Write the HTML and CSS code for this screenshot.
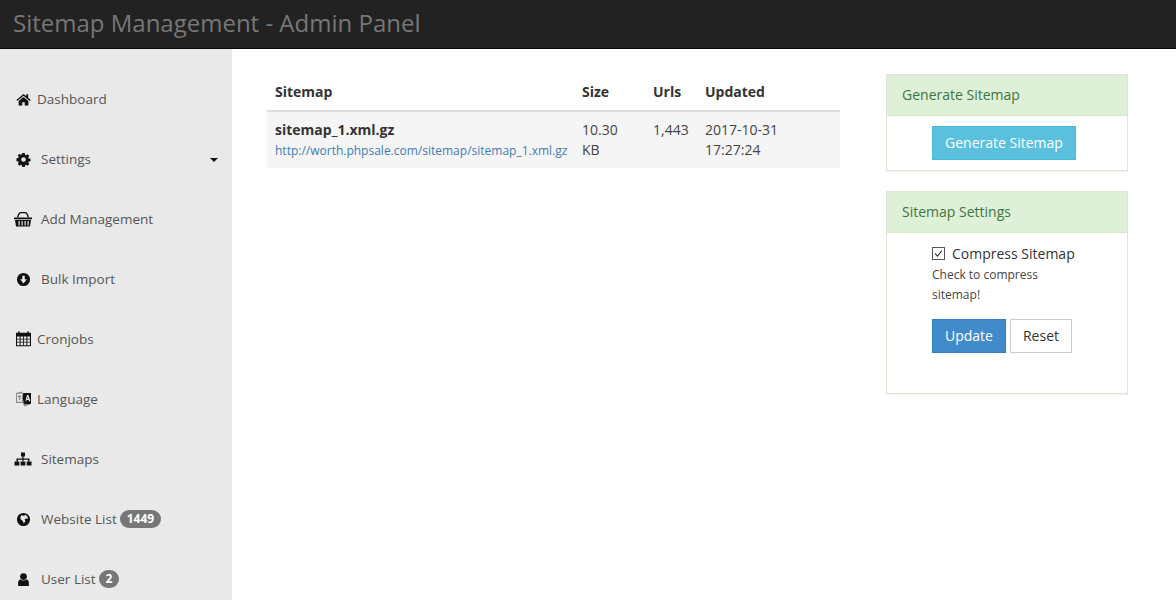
FILE: index.html
```html
<!DOCTYPE html>
<html lang="en">
<head>
    <meta charset="UTF-8">
    <title>Sitemap Management - Admin Panel</title>
    <link rel="stylesheet" href="styles.css">
</head>
<body>
<div class="topbar">Sitemap Management - Admin Panel</div>
<div class="wrap">
    <ul class="sidebar">
        <li><a href="#" class="tight">
            <svg class="icon" viewBox="0 0 16 16"><path d="M8 2 .4 8.4l.9 1.100L8 4l6.700 5.500.9-1.100L13 6.200V2.500h-2v2z"/><path d="M8 5.200 2.800 9.500v5h3.900V11h2.600v3.500h3.900v-5z"/></svg>
            Dashboard</a></li>
        <li><a href="#">
            <svg class="icon" viewBox="0 0 16 16"><path fill-rule="evenodd" d="M6.700 1h2.600l.4 2 1 .4 1.700-1.100 1.800 1.800-1.100 1.700.4 1 2 .4v2.600l-2 .4-.4 1 1.100 1.700-1.800 1.800-1.700-1.100-1 .4-.4 2H6.700l-.4-2-1-.4-1.700 1.100-1.800-1.800 1.100-1.700-.4-1-2-.4V6.700l2-.4.4-1-1.100-1.700 1.800-1.800 1.700 1.100 1-.4zM8 5.500a2.500 2.500 0 1 0 0 5 2.500 2.500 0 0 0 0-5z"/></svg>
            Settings<span class="caret"></span></a></li>
        <li><a href="#">
            <svg class="icon wide" viewBox="0 0 18 16"><path d="M0 6.500h18v1.800H0z"/><path fill-rule="evenodd" d="M1 9h16l-1 6.500H2zM4.500 10v4.500h1.200V10zm3 0v4.500h1.200V10zm3 0v4.500h1.200V10zm3 0v4.500h1.200V10z"/><path d="M3 6.500C3.500 3 5 1 7 1h4c2 0 3.500 2 4 5.500h-1.400C13.200 3.800 12 2.300 10.800 2.300H7.200C6 2.300 4.800 3.800 4.400 6.500z"/></svg>
            Add Management</a></li>
        <li><a href="#">
            <svg class="icon" viewBox="0 0 16 16"><path fill-rule="evenodd" d="M8 1a7 7 0 1 0 0 14A7 7 0 0 0 8 1zM6.700 4h2.600v3.600h2.300L8 12.200 4.400 7.600h2.300z"/></svg>
            Bulk Import</a></li>
        <li><a href="#" class="tight">
            <svg class="icon tall" viewBox="1 1.500 14 14.500"><path fill-rule="evenodd" d="M1 3h2V1.800h1.500V3h7V1.800H13V3h2v12.500H1zM2 6.500v2h2.400v-2zm3.300 0v2h2.300v-2zm3.100 0v2h2.300v-2zm3.200 0v2H14v-2zM2 9.300v2h2.400v-2zm3.300 0v2h2.300v-2zm3.100 0v2h2.300v-2zm3.200 0v2H14v-2zM2 12.100v2.400h2.400v-2.400zm3.300 0v2.400h2.300v-2.400zm3.100 0v2.400h2.300v-2.400zm3.200 0v2.400H14v-2.400z"/></svg>
            Cronjobs</a></li>
        <li><a href="#" class="tight">
            <svg class="icon tall" viewBox="1 1 14.500 14.500"><path fill="#8a8a8a" fill-rule="evenodd" d="M1 2.500 7 1l1 3.500 6.500 9L9 15.500 7.500 12H1zm1 1V11h5V3z"/><path fill-rule="evenodd" d="M8 2.500h7.500V13H9L7.500 8zm3.700 2-1.900 6h1.300l.4-1.300h1.700l.4 1.300h1.300L13 4.500zm.6 1.600.5 2h-1z"/><path fill="#555" d="M3 5h3v1h-.7L5 9H3.600l1-.8L3.300 7l.7-.3.8.6.2-1.300H3z"/></svg>
            Language</a></li>
        <li><a href="#">
            <svg class="icon wide" viewBox="0 0 18 16"><path d="M7 1.500h4v4H9.600v2h5.900v3H14V8.800H9.600v1.700H8.400V8.800H4v1.700H2.500v-3h5.900v-2H7z"/><path d="M.5 10.500h4.800v4H.5zM6.600 10.500h4.800v4H6.600zM12.700 10.500h4.800v4h-4.800z"/></svg>
            Sitemaps</a></li>
        <li><a href="#">
            <svg class="icon" viewBox="0 0 16 16"><path fill-rule="evenodd" d="M8 1a7 7 0 1 0 0 14A7 7 0 0 0 8 1zM5.500 3.500l3 .5 1.500-1 2 1.500.8 3-1.800-.5-1.800.8.800 2-1.800 2.400-.9-2.700-1.800-1.200-1-1.800z"/></svg>
            Website List<span class="badge">1449</span></a></li>
        <li><a href="#">
            <svg class="icon" viewBox="0 0 16 16"><circle cx="8" cy="4.800" r="3.600"/><path d="M2.300 15v-3.500Q2.300 8.200 5 8q3 2 6 0 2.700.2 2.700 3.500V15z"/></svg>
            User List<span class="badge">2</span></a></li>
    </ul>

    <div class="main">
        <table class="sitemaps">
            <thead>
            <tr>
                <th class="col-name">Sitemap</th>
                <th class="col-size">Size</th>
                <th class="col-urls">Urls</th>
                <th>Updated</th>
            </tr>
            </thead>
            <tbody>
            <tr>
                <td><b>sitemap_1.xml.gz</b><a href="#" class="file-url">http://worth.phpsale.com/sitemap/sitemap_1.xml.gz</a></td>
                <td>10.30 KB</td>
                <td>1,443</td>
                <td>2017-10-31 17:27:24</td>
            </tr>
            </tbody>
        </table>
    </div>

    <div class="side">
        <div class="panel">
            <div class="panel-heading">Generate Sitemap</div>
            <div class="panel-body">
                <a href="#" class="btn btn-info">Generate Sitemap</a>
            </div>
        </div>
        <div class="panel">
            <div class="panel-heading">Sitemap Settings</div>
            <div class="panel-body settings">
                <label class="check">
                    <span class="box"><svg viewBox="0 0 13 13"><path d="M2.500 6.500 5.300 9.500 10.500 3" fill="none" stroke="#333" stroke-width="1.300"/></svg></span>
                    Compress Sitemap
                </label>
                <p class="help">Check to compress sitemap!</p>
                <div class="actions">
                    <a href="#" class="btn btn-primary">Update</a>
                    <a href="#" class="btn btn-default">Reset</a>
                </div>
            </div>
        </div>
    </div>
</div>
</body>
</html>
```
FILE: styles.css
```css
*{
    margin:0;
    padding:0;
    box-sizing: border-box;
}
html, body{
    height:600px;
    overflow: hidden;
}
body{
    font-family: "Open Sans", "Liberation Sans", sans-serif;
    font-size:14px;
    color:#333;
    background:#fff;
}
a{
    text-decoration: none;
}

.topbar{
    height:49px;
    line-height:46px;
    padding-left:13px;
    font-size:24px;
    color:#777;
    background:#222;
    border-bottom:1px solid #080808;
}
.wrap{
    display: flex;
    height:551px;
}

.sidebar{
    width:232px;
    flex:none;
    padding-top:20px;
    background:#e9e9e9;
    list-style: none;
}
.sidebar li{
    height:60px;
}
.sidebar a{
    display: flex;
    align-items: center;
    height:60px;
    padding:0 14px 0 16px;
    font-size:13.5px;
    color:#555;
}
.icon{
    width:15px;
    height:15px;
    flex:none;
    margin-right:10px;
    fill:#111;
}
.icon.wide{
    width:18px;
    height:16px;
    margin-left:-2px;
    margin-right:9px;
}
.icon.tall{
    height:16px;
}
.tight .icon{
    margin-right:6px;
}
.caret{
    margin-left:auto;
    margin-top:2px;
    border-top:4px solid #111;
    border-left:4px solid transparent;
    border-right:4px solid transparent;
}
.badge{
    height:18px;
    min-width:10px;
    padding:0 7px;
    margin-left:3px;
    font-size:12px;
    font-weight:bold;
    line-height:18px;
    color:#fff;
    background:#777;
    border-radius:10px;
}

.main{
    width:608px;
    flex:none;
    padding:25px 0 0 35px;
}
.sitemaps{
    width:573px;
    table-layout: fixed;
    border-collapse: collapse;
}
.col-name{
    width:307px;
}
.col-size{
    width:71px;
}
.col-urls{
    width:52px;
}
.sitemaps th{
    height:37px;
    padding:0 8px 2px;
    text-align: left;
    border-bottom:2px solid #ddd;
}
.sitemaps td{
    padding:8px;
    line-height:20px;
    vertical-align: top;
    color:#444;
    background:#f5f5f5;
}
.sitemaps td b{
    color:#333;
}
.file-url{
    display: block;
    margin-top:1px;
    font-size:12px;
    line-height:19px;
    white-space: nowrap;
    color:#3f7cb5;
}

.side{
    width:242px;
    flex:none;
    margin-left:46px;
    padding-top:25px;
}
.panel{
    margin-bottom:20px;
    background:#fff;
    border:1px solid #dde6d2;
    box-shadow:0 1px 1px rgba(0,0,0,.05);
}
.panel-heading{
    height:41px;
    line-height:40px;
    padding-left:15px;
    color:#3c763d;
    background:#dff0d8;
    border-bottom:1px solid #d6e9c6;
}
.panel-body{
    padding:10px 45px;
    height:54px;
}
.settings{
    height:160px;
    padding-top:10px;
}
.btn{
    display: inline-block;
    height:34px;
    line-height:32px;
    padding:0 12px;
    text-align: center;
    border:1px solid transparent;
}
.btn-info{
    color:#fff;
    background:#5bc0de;
    border-color:#46b8da;
}
.btn-primary{
    color:#fff;
    background:#428bca;
    border-color:#357ebd;
}
.btn-default{
    color:#333;
    background:#fff;
    border-color:#ccc;
}
.check{
    display: flex;
    align-items: center;
    height:20px;
}
.box{
    width:13px;
    height:13px;
    margin-right:7px;
    background:#fff;
    border:1px solid #555;
}
.box svg{
    display: block;
    width:11px;
    height:11px;
}
.help{
    width:130px;
    margin-top:2px;
    font-size:12px;
    line-height:20px;
    color:#444;
}
.actions{
    display: flex;
    gap:4px;
    margin-top:14px;
}
```
